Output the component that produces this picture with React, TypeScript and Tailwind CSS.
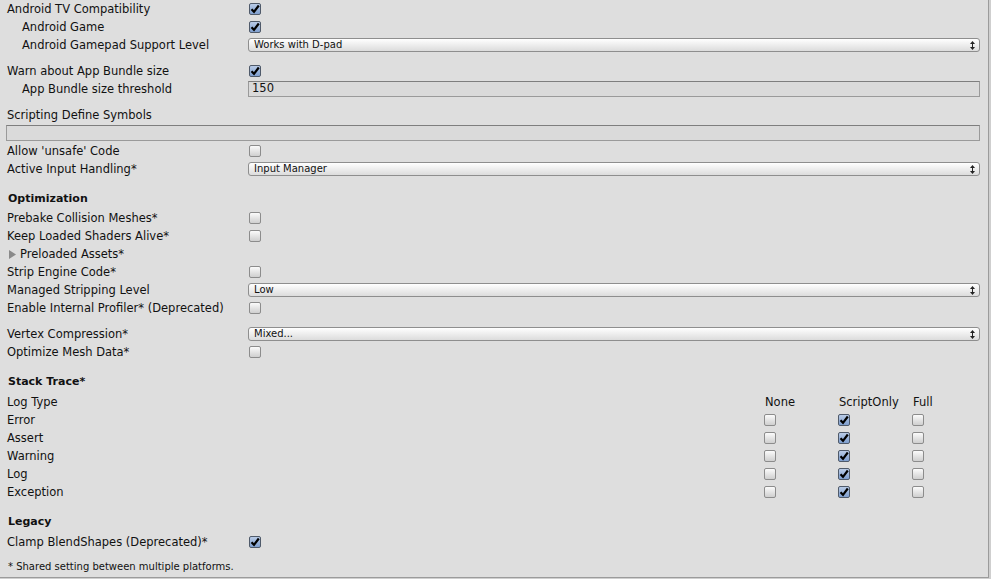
import React from 'react';

const font = "font-['DejaVu_Sans',sans-serif]";

const Check: React.FC<{ on?: boolean }> = ({ on }) =>
  on ? (
    <div className="w-[12px] h-[12px] rounded-[2px] border border-[#4f5a6a] bg-gradient-to-b from-[#b9cbe6] to-[#7f9fcf] flex items-center justify-center">
      <svg width="10" height="10" viewBox="0 0 10 10">
        <path d="M1.5 5.2 L4 7.8 L8.8 1.5" fill="none" stroke="#000" strokeWidth="2.2" strokeLinejoin="miter" />
      </svg>
    </div>
  ) : (
    <div className="w-[12px] h-[12px] rounded-[2px] border border-[#8c8c8c] bg-gradient-to-b from-[#fbfbfb] to-[#cfcfcf]" />
  );

const Popup: React.FC<{ value: string }> = ({ value }) => (
  <div className="flex-1 h-[14px] rounded-[3px] border border-[#8e8e8e] bg-gradient-to-b from-[#ffffff] to-[#dcdcdc] flex items-center pl-[5px] pr-[4px] text-[10px] leading-none">
    <span className="flex-1">{value}</span>
    <svg width="5" height="9" viewBox="0 0 5 9">
      <polygon points="2.5,0 5,3 0,3" fill="#222" />
      <rect x="2" y="3" width="1" height="3" fill="#222" />
      <polygon points="0,6 5,6 2.5,9" fill="#222" />
    </svg>
  </div>
);

const Field: React.FC<{ value?: string; className?: string }> = ({ value, className }) => (
  <div className={`flex-1 h-[16px] border border-[#9a9a9a] border-t-[#7e7e7e] bg-[#dadada] flex items-center pl-[3px] text-[11.5px] leading-none ${className ?? ''}`}>
    {value}
  </div>
);

interface RowProps {
  label: React.ReactNode;
  indent?: boolean;
  children?: React.ReactNode;
  className?: string;
}

const Row: React.FC<RowProps> = ({ label, indent, children, className }) => (
  <div className={`flex h-[18px] items-center ${className ?? ''}`}>
    <div className={`${indent ? 'pl-[22px]' : 'pl-[7px]'} pt-px w-[248px] shrink-0 whitespace-nowrap`}>{label}</div>
    <div className="flex-1 pr-[8px] flex items-center">{children}</div>
  </div>
);

const Header: React.FC<{ title: string; className?: string }> = ({ title, className }) => (
  <div className={`h-[18px] flex items-center pl-[8px] font-bold text-[11px] ${className ?? ''}`}>{title}</div>
);

const stackRows: [string, number][] = [
  ['Error', 1],
  ['Assert', 1],
  ['Warning', 1],
  ['Log', 1],
  ['Exception', 1],
];

export default function App() {
  return (
    <div className={`w-[991px] h-[579px] bg-[#cfcfcf] overflow-hidden ${font}`}>
      <div className="w-[989px] h-[578px] bg-[#dedede] border-r border-b border-[#9b9b9b] text-[11.5px] text-[#111] leading-none">
        <Row label="Android TV Compatibility"><div className="ml-px"><Check on /></div></Row>
        <Row label="Android Game" indent><div className="ml-px"><Check on /></div></Row>
        <Row label="Android Gamepad Support Level" indent><Popup value="Works with D-pad" /></Row>

        <Row label="Warn about App Bundle size" className="mt-[8px]"><div className="ml-px"><Check on /></div></Row>
        <Row label="App Bundle size threshold" indent><Field value="150" /></Row>

        <Row label="Scripting Define Symbols" className="mt-[8px]" />
        <div className="flex h-[16px] pl-[6px] pr-[8px] mt-px mb-[1px]">
          <Field />
        </div>
        <Row label="Allow 'unsafe' Code"><div className="ml-px"><Check /></div></Row>
        <Row label="Active Input Handling*"><Popup value="Input Manager" /></Row>

        <Header title="Optimization" className="mt-[12px] pb-px" />
        <Row label="Prebake Collision Meshes*" className="mt-px"><div className="ml-px"><Check /></div></Row>
        <Row label="Keep Loaded Shaders Alive*"><div className="ml-px"><Check /></div></Row>
        <div className="flex h-[18px] items-center pl-[9px] pt-px">
          <svg width="8" height="9" viewBox="0 0 8 9" className="mr-[3px]">
            <polygon points="0,0 7,4.5 0,9" fill="#8a8a8a" />
          </svg>
          <span>Preloaded Assets*</span>
        </div>
        <Row label="Strip Engine Code*"><div className="ml-px"><Check /></div></Row>
        <Row label="Managed Stripping Level"><Popup value="Low" /></Row>
        <Row label="Enable Internal Profiler* (Deprecated)"><div className="ml-px"><Check /></div></Row>

        <Row label="Vertex Compression*" className="mt-[8px]"><Popup value="Mixed..." /></Row>
        <Row label="Optimize Mesh Data*"><div className="ml-px"><Check /></div></Row>

        <Header title="Stack Trace*" className="mt-[12px] pb-px" />
        <div className="flex h-[18px] items-center mt-[2px] pt-px">
          <div className="w-[764px] pl-[7px] shrink-0">Log Type</div>
          <div className="w-[74px] pl-[1px]">None</div>
          <div className="w-[74px] pl-[1px]">ScriptOnly</div>
          <div className="flex-1 pl-[1px]">Full</div>
        </div>
        {stackRows.map(([name, sel]) => (
          <div key={name} className="flex h-[18px] items-center">
            <div className="w-[764px] pl-[7px] pt-px shrink-0">{name}</div>
            {[0, 1, 2].map(i => (
              <div key={i} className="w-[74px]"><Check on={i === sel} /></div>
            ))}
          </div>
        ))}

        <Header title="Legacy" className="mt-[12px] pb-px" />
        <Row label="Clamp BlendShapes (Deprecated)*" className="mt-[2px]"><div className="ml-px"><Check on /></div></Row>

        <div className="h-[18px] flex items-center pl-[8px] mt-[7px] text-[10px]">* Shared setting between multiple platforms.</div>
      </div>
    </div>
  );
}
